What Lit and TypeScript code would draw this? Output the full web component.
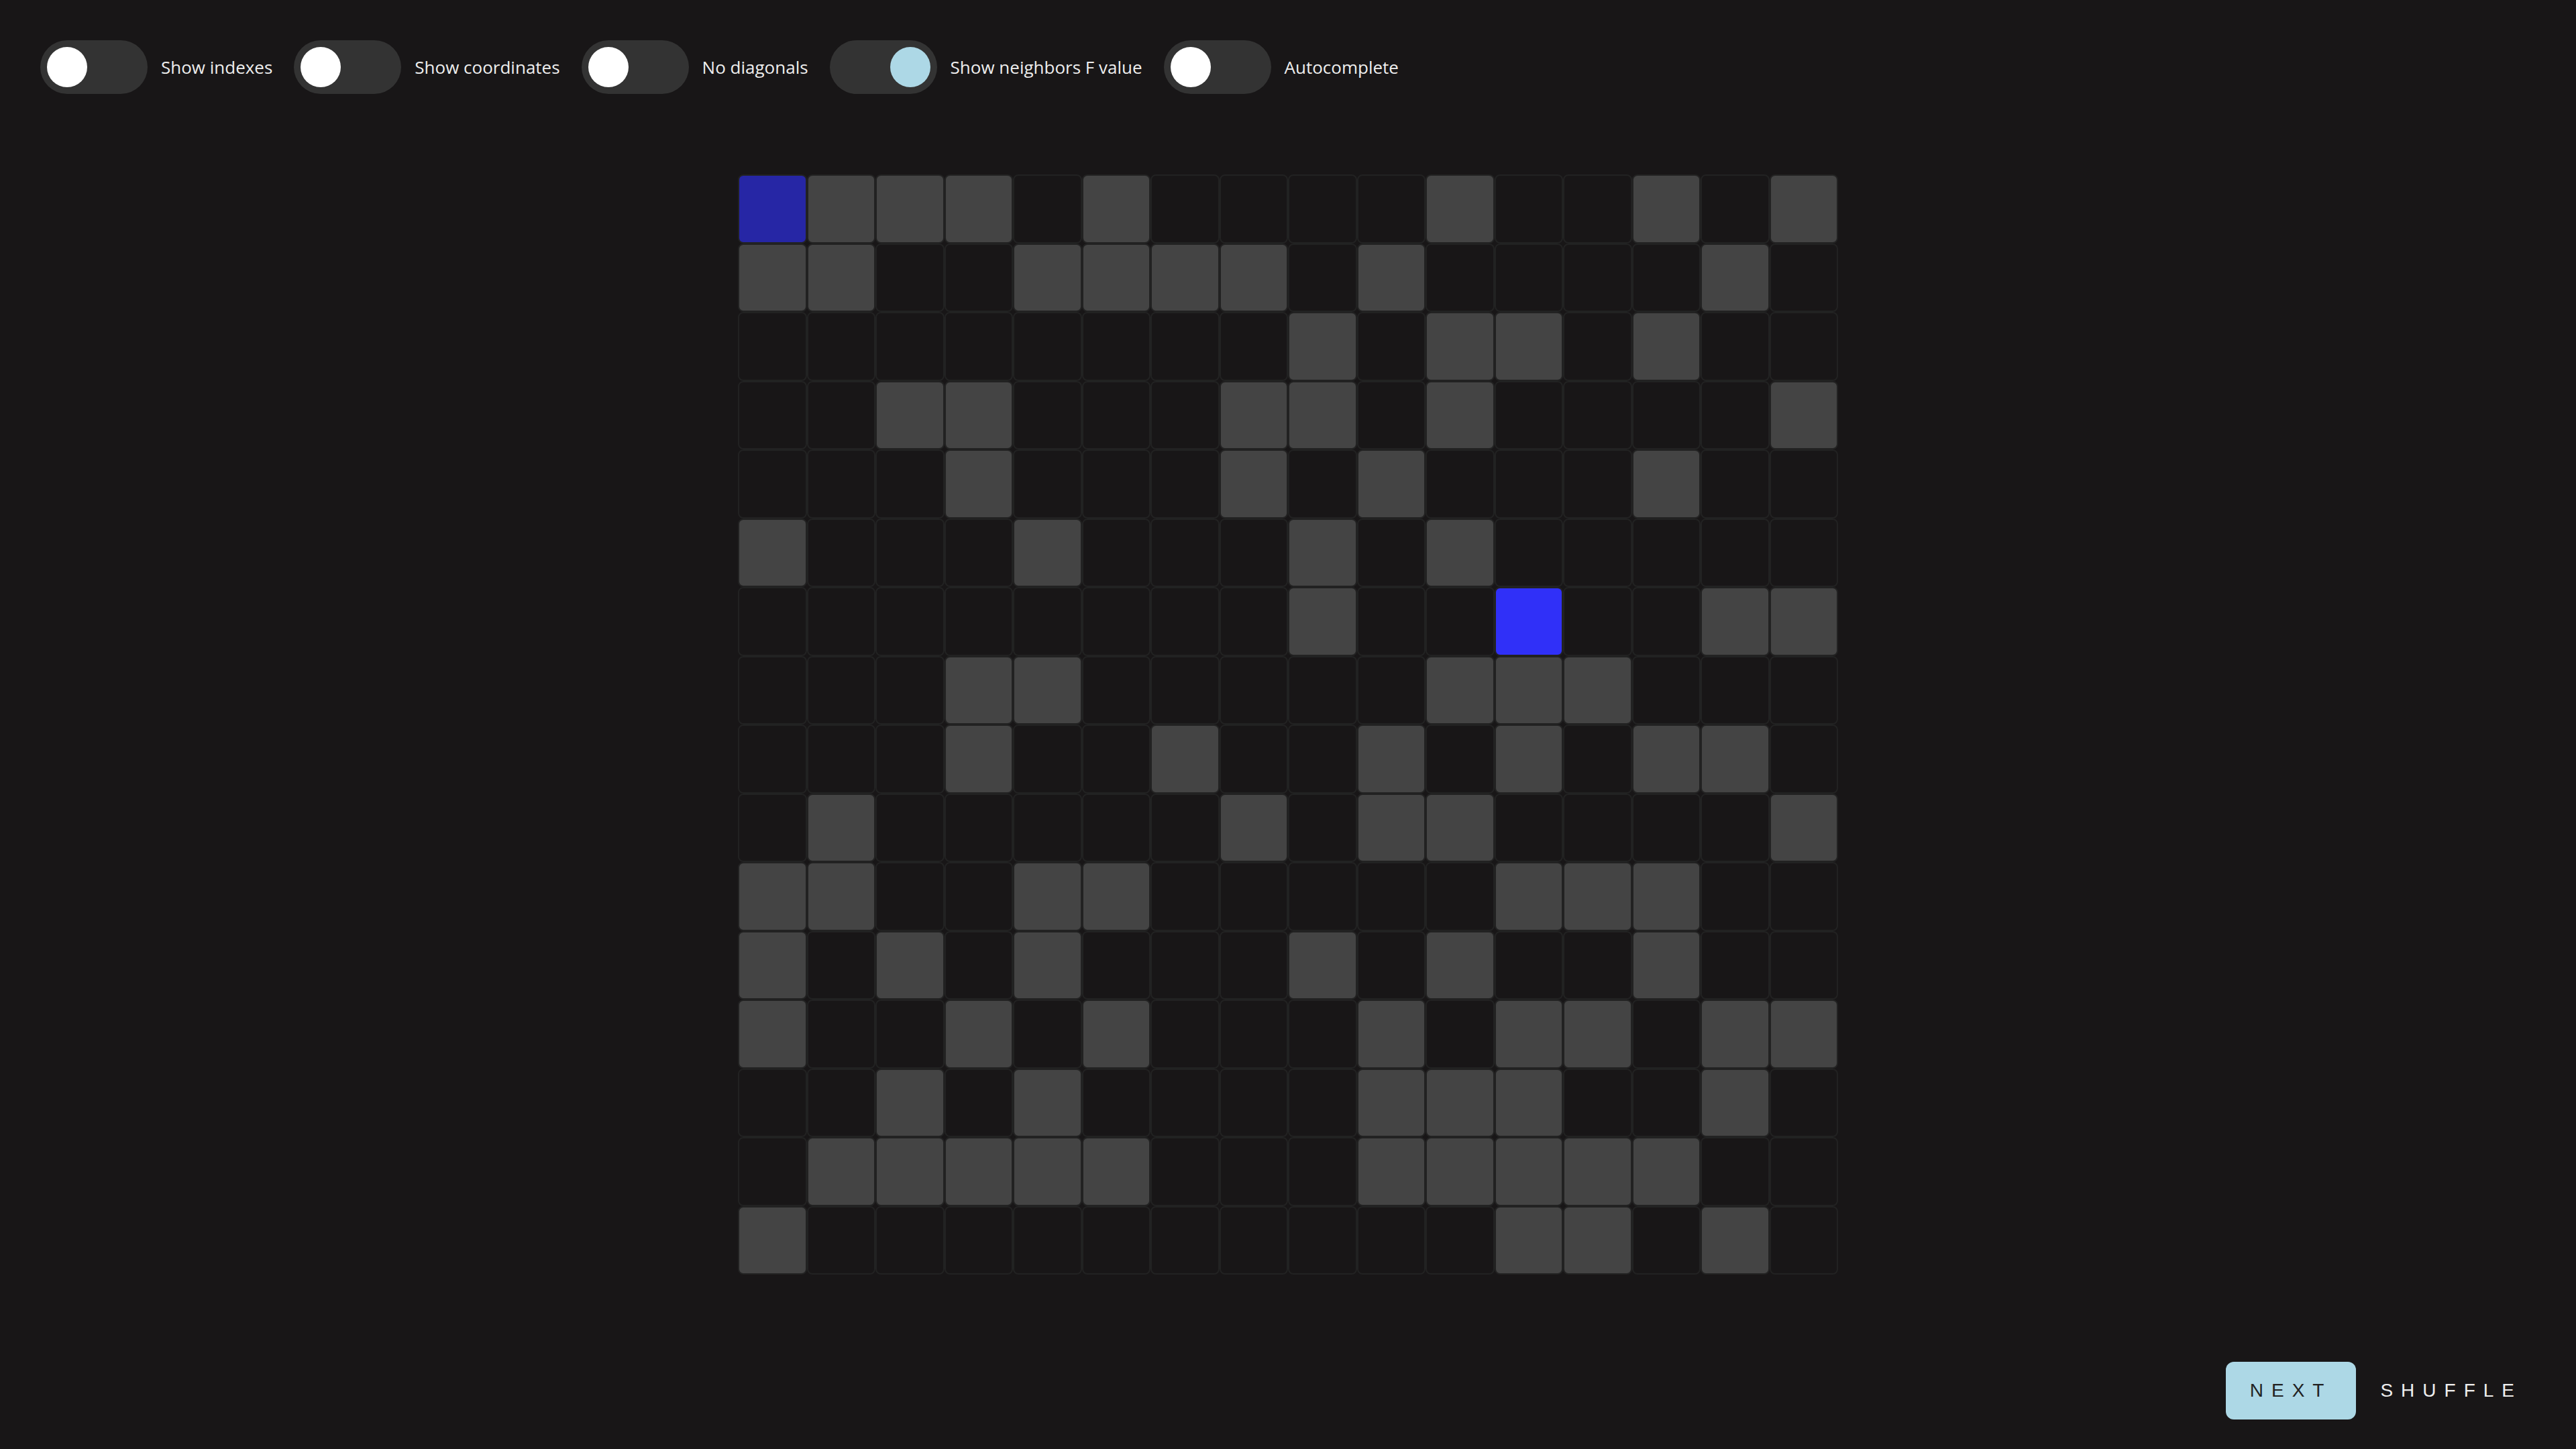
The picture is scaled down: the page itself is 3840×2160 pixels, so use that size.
import { LitElement, html, css } from "lit";
import { customElement, state } from "lit/decorators.js";
import { classMap } from "lit/directives/class-map.js";

interface Option {
  id: string;
  label: string;
  on: boolean;
}

// S = start, G = goal, # = wall, . = free
const BOARD = [
  "S###.#....#..#.#",
  "##..####.#....#.",
  "........#.##.#..",
  "..##...##.#....#",
  "...#...#.#...#..",
  "#...#...#.#.....",
  "........#..G..##",
  "...##.....###...",
  "...#..#..#.#.##.",
  ".#.....#.##....#",
  "##..##.....###..",
  "#.#.#...#.#..#..",
  "#..#.#...#.##.##",
  "..#.#....###..#.",
  ".#####...#####..",
  "#..........##.#.",
];

@customElement("app-root")
export class AppRoot extends LitElement {
  static styles = css`
    :host {
      display: flex;
      flex-direction: column;
      min-height: 100vh;
      box-sizing: border-box;
      background: #181617;
      color: #eee;
      font-family: "Open Sans", "Noto Sans", sans-serif;
    }
    .options {
      display: flex;
      flex-wrap: wrap;
      gap: 32px;
      padding: 60px;
    }
    .option {
      display: flex;
      align-items: center;
      gap: 20px;
      font-size: 26px;
      line-height: 36px;
      cursor: pointer;
    }
    .switch {
      appearance: none;
      display: flex;
      box-sizing: border-box;
      width: 160px;
      height: 80px;
      margin: 0;
      padding: 10px;
      border-radius: 40px;
      background: #333;
      cursor: pointer;
    }
    .switch::before {
      content: "";
      width: 60px;
      height: 60px;
      border-radius: 50%;
      background: #fff;
    }
    .switch:checked {
      justify-content: flex-end;
    }
    .switch:checked::before {
      background: lightblue;
    }
    .stage {
      flex: 1;
      display: flex;
      align-items: center;
      justify-content: center;
    }
    .board {
      display: grid;
      grid-template-columns: repeat(16, 1fr);
      width: min(100%, 1640px);
      aspect-ratio: 1;
    }
    .cell {
      border: 2px solid #222;
      border-radius: 8px;
    }
    .wall {
      background: #444;
    }
    .start {
      background: #2626a5;
    }
    .goal {
      background: #3030f8;
    }
    .actions {
      display: flex;
      justify-content: flex-end;
      padding: 70px 44px 44px;
    }
    .action {
      border: 0;
      border-radius: 12px;
      padding: 27px 36px;
      background: transparent;
      color: #eee;
      font-family: "Liberation Sans", Arial, sans-serif;
      font-size: 28px;
      line-height: 32px;
      letter-spacing: 12px;
      text-transform: uppercase;
      cursor: pointer;
    }
    .primary {
      background: lightblue;
      color: #222;
    }
  `;

  @state() private options: Option[] = [
    { id: "indexes", label: "Show indexes", on: false },
    { id: "coordinates", label: "Show coordinates", on: false },
    { id: "diagonals", label: "No diagonals", on: false },
    { id: "neighbors", label: "Show neighbors F value", on: true },
    { id: "autocomplete", label: "Autocomplete", on: false },
  ];

  private toggle(id: string) {
    this.options = this.options.map((o) => (o.id === id ? { ...o, on: !o.on } : o));
  }

  render() {
    return html`
      <header class="options">
        ${this.options.map(
          (o) => html`
            <label class="option" for=${o.id}>
              <input class="switch" type="checkbox" id=${o.id} .checked=${o.on} @change=${() => this.toggle(o.id)} />
              <span>${o.label}</span>
            </label>
          `
        )}
      </header>
      <main class="stage">
        <div class="board">
          ${BOARD.flatMap((row) =>
            [...row].map(
              (c) =>
                html`<div class=${classMap({ cell: true, wall: c === "#", start: c === "S", goal: c === "G" })}></div>`
            )
          )}
        </div>
      </main>
      <footer class="actions">
        <button class="action primary" type="button">Next</button>
        <button class="action" type="button">Shuffle</button>
      </footer>
    `;
  }
}
